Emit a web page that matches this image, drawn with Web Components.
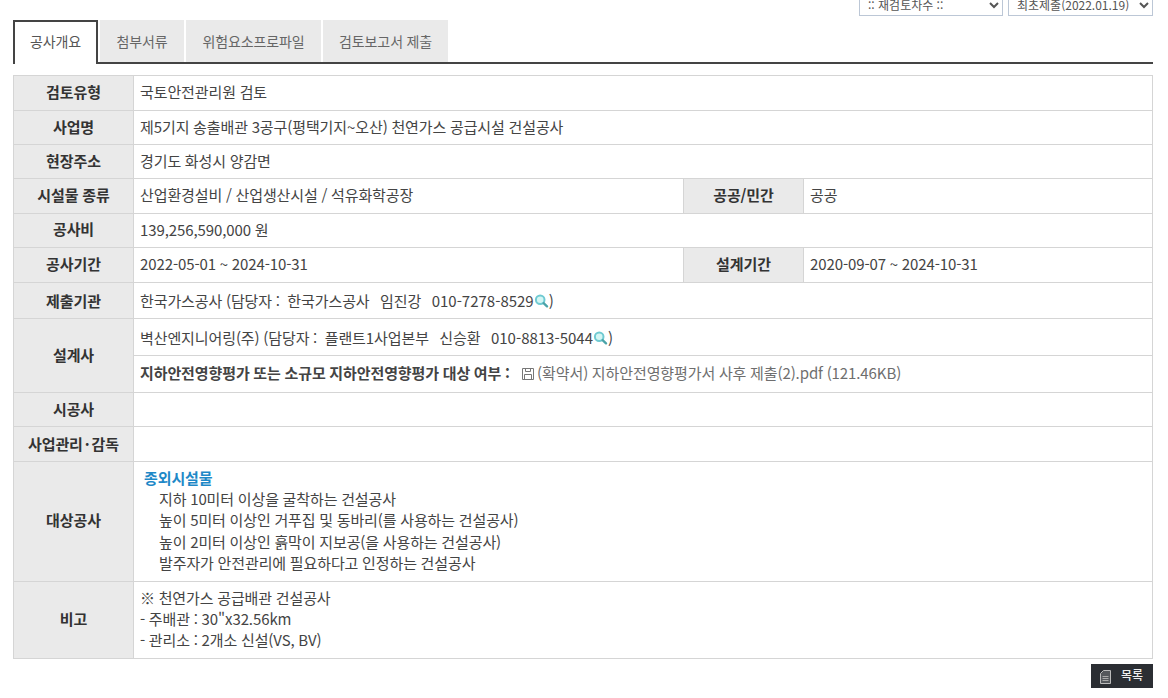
<!DOCTYPE html>
<html lang="ko"><head><meta charset="utf-8"><title>공사개요</title>
<style>
html,body{margin:0;padding:0;background:#fff;overflow:hidden}
body{font:15px/21.33px "Noto Sans CJK KR","Noto Sans",sans-serif;color:#333;letter-spacing:-.1px;word-spacing:-.35px}
b.sp{font-weight:700}
.t{color:#1e88c7;font-weight:700;padding-left:4px;display:block}
.i{padding-left:19px;display:block}
.f{color:#6e6e6e}
.g{word-spacing:-.6px}
.n{letter-spacing:0}
.d{margin:0 2px}
</style></head><body>
<review-page>
  <top-selects slot="top">
    <option-box label=":: 재검토차수 ::"></option-box>
    <option-box label="최초제출(2022.01.19)"></option-box>
  </top-selects>
  <tab-bar slot="tabs">
    <tab-item active w="85">공사개요</tab-item>
    <tab-item w="84">첨부서류</tab-item>
    <tab-item w="135">위험요소프로파일</tab-item>
    <tab-item w="125">검토보고서 제출</tab-item>
  </tab-bar>
  <info-grid slot="grid">
    <info-cell head>검토유형</info-cell><info-cell span="3">국토안전관리원 검토</info-cell>
    <info-cell head nudge="1">사업명</info-cell><info-cell span="3" nudge="1">제5기지 송출배관 3공구(평택기지~오산) 천연가스 공급시설 건설공사</info-cell>
    <info-cell head nudge="1">현장주소</info-cell><info-cell span="3" nudge="1">경기도 화성시 양감면</info-cell>
    <info-cell head>시설물 종류</info-cell><info-cell>산업환경설비 / 산업생산시설 / 석유화학공장</info-cell><info-cell head>공공/민간</info-cell><info-cell>공공</info-cell>
    <info-cell head>공사비</info-cell><info-cell span="3" nudge="1">139,256,590,000 원</info-cell>
    <info-cell head>공사기간</info-cell><info-cell>2022-05-01 ~ 2024-10-31</info-cell><info-cell head>설계기간</info-cell><info-cell>2020-09-07 ~ 2024-10-31</info-cell>
    <info-cell head nudge="2">제출기관</info-cell><info-cell span="3" nudge="2">한국가스공사 (담당자 :&nbsp; <span class="g">한국가스공사 &nbsp; 임진강 &nbsp; </span><span class="n">010-7278-8529</span><search-icon></search-icon>)</info-cell>
    <info-cell head rows="2" nudge="1">설계사</info-cell><info-cell span="3" nudge="2">벽산엔지니어링(주) (담당자 :&nbsp; <span class="g">플랜트1사업본부 &nbsp; 신승환 &nbsp; </span><span class="n">010-8813-5044</span><search-icon></search-icon>)</info-cell>
    <info-cell span="3"><b class="sp">지하안전영향평가 또는 소규모 지하안전영향평가 대상 여부 :</b>&nbsp;&nbsp; <file-icon></file-icon><span class="f">(확약서) 지하안전영향평가서 사후 제출(2).pdf (121.46KB)</span></info-cell>
    <info-cell head nudge="1">시공사</info-cell><info-cell span="3"></info-cell>
    <info-cell head nudge="1">사업관리<span class="d">·</span>감독</info-cell><info-cell span="3"></info-cell>
    <info-cell head>대상공사</info-cell><info-cell span="3"><span class="t">종외시설물</span><span class="i">지하 10미터 이상을 굴착하는 건설공사</span><span class="i">높이 5미터 이상인 거푸집 및 동바리(를 사용하는 건설공사)</span><span class="i">높이 2미터 이상인 흙막이 지보공(을 사용하는 건설공사)</span><span class="i">발주자가 안전관리에 필요하다고 인정하는 건설공사</span></info-cell>
    <info-cell head>비고</info-cell><info-cell span="3"><div>※ 천연가스 공급배관 건설공사</div><div>- 주배관 : 30"x32.56km</div><div>- 관리소 : 2개소 신설(VS, BV)</div></info-cell>
  </info-grid>
  <list-button slot="actions">목록</list-button>
</review-page>
<script>
function def(name, css, html, init){
  customElements.define(name, class extends HTMLElement{
    connectedCallback(){
      if(this.shadowRoot) return;
      const r=this.attachShadow({mode:'open'});
      r.innerHTML='<style>'+css+'</style>'+(typeof html==='function'?html(this):html);
      if(init) init(this,r);
    }
  });
}
def('review-page',':host{display:block;width:1140px;margin-left:13px}.a{display:flex;justify-content:flex-end;margin-top:5px}',
 '<slot name="top"></slot><slot name="tabs"></slot><slot name="grid"></slot><div class="a"><slot name="actions"></slot></div>');
def('top-selects',':host{display:flex;justify-content:flex-end;gap:5px;margin-top:-7px;height:27px}','<slot></slot>');
def('option-box',':host{display:block;width:145px;height:22px}:host(:first-child){width:144px}select{width:100%;height:22px;box-sizing:border-box;border:1px solid #bcc7d6;background:#fff;color:#555;font:12px "Noto Sans CJK KR",sans-serif;padding:0 4px;border-radius:0}',
 h=>'<select><option>'+h.getAttribute('label')+'</option></select>');
def('tab-bar',':host{display:flex;gap:2px;border-bottom:2px solid #444;box-sizing:border-box;margin-bottom:11px;height:44px}','<slot></slot>');
def('tab-item',':host{display:flex;align-items:center;justify-content:center;box-sizing:border-box;height:42px;background:#eaeaea;color:#666;font-size:14px;padding-top:2px}:host([active]){height:44px;background:#fff;border:2px solid #444;border-bottom:0;color:#555;position:relative;padding:0 0 2px}',
 '<slot></slot>',(h)=>{h.style.width=h.getAttribute('w')+'px'});
def('info-grid',':host{display:grid;grid-template-columns:119px 549px 119px 348px;grid-template-rows:34px 33px 33px 34px 33px 34px 35px 36px 36px 33px 34px 119px 76px;gap:1px;padding:1px;background:#d5d5d5;box-sizing:border-box;width:1140px}','<slot></slot>');
def('info-cell',':host{display:flex;flex-direction:column;justify-content:center;background:#fff;padding:0 6px 3px;min-width:0;white-space:nowrap;color:#444;box-sizing:border-box}:host([head]){background:#eaeaea;font-weight:700;align-items:center;padding:0 0 3px;color:#333}:host([nudge="1"]){padding-bottom:1px}:host([nudge="2"]){padding-bottom:0;padding-top:1px}',
 '<div><slot></slot></div>',h=>{
  const s=h.getAttribute('span'), r=h.getAttribute('rows');
  if(s) h.style.gridColumn='span '+s;
  if(r) h.style.gridRow='span '+r;
 });
def('search-icon',':host{display:inline-block;width:15px;height:14px;vertical-align:-1px}svg{display:block}',
 '<svg width="15" height="14" viewBox="0 0 15 14"><circle cx="6.2" cy="5.8" r="4.3" fill="#d4f6f4" stroke="#6fcad2" stroke-width="2"/><path d="M9.6 9.2l3.4 3.2" stroke="#4aa3a8" stroke-width="2.3" stroke-linecap="round"/></svg>');
def('file-icon',':host{display:inline-block;width:12px;height:12px;vertical-align:-1px;margin:0 3px 0 1px}svg{display:block}',
 '<svg width="12" height="12" viewBox="0 0 12 12" fill="none" stroke="#777"><path d="M.5.5h11v11H.5zM3.5.5v3h5v-3M2.5 11.5v-5h7v5"/></svg>');
def('list-button',':host{display:flex;align-items:center;box-sizing:border-box;width:62px;height:24px;background:#2b2e33;color:#eee;font-size:12px;font-weight:500;padding:0 0 3px 9px;gap:10px}svg{display:block;margin-top:4px}',
 '<svg width="11" height="14" viewBox="0 0 11 14" fill="#55585c" stroke="#bbb"><path d="M3.5.5h7v13H.5v-10z"/><path d="M2.5 6.5h6M2.5 8.5h6M2.5 10.5h6" stroke="#aaa"/></svg><slot></slot>');
</script>
</body></html>
